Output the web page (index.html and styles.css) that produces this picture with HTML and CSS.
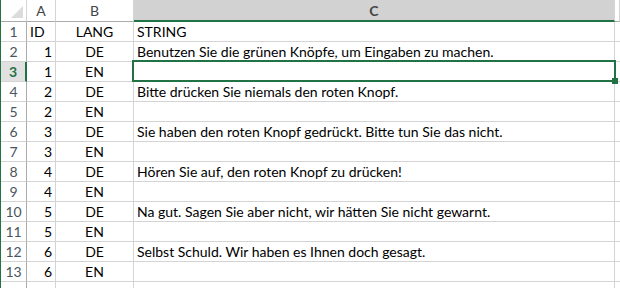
FILE: index.html
```html
<!DOCTYPE html>
<html lang="de">
<head>
    <meta charset="UTF-8">
    <title>Mappe1 - Excel</title>
    <link rel="stylesheet" href="styles.css">
</head>
<body>
    <div class="sheet">
        <div class="row head">
            <div class="corner"><span class="tri"></span></div>
            <div class="ch">A</div>
            <div class="ch">B</div>
            <div class="ch active">C</div>
            <div class="ch"></div>
        </div>
        <div class="row"><div class="rh">1</div><div class="c">ID</div><div class="c mid">LANG</div><div class="c">STRING</div><div class="c"></div></div>
        <div class="row"><div class="rh">2</div><div class="c num">1</div><div class="c mid">DE</div><div class="c">Benutzen Sie die grünen Knöpfe, um Eingaben zu machen.</div><div class="c"></div></div>
        <div class="row"><div class="rh active">3</div><div class="c num">1</div><div class="c mid">EN</div><div class="c"></div><div class="c"></div></div>
        <div class="row"><div class="rh">4</div><div class="c num">2</div><div class="c mid">DE</div><div class="c">Bitte drücken Sie niemals den roten Knopf.</div><div class="c"></div></div>
        <div class="row"><div class="rh">5</div><div class="c num">2</div><div class="c mid">EN</div><div class="c"></div><div class="c"></div></div>
        <div class="row"><div class="rh">6</div><div class="c num">3</div><div class="c mid">DE</div><div class="c">Sie haben den roten Knopf gedrückt. Bitte tun Sie das nicht.</div><div class="c"></div></div>
        <div class="row"><div class="rh">7</div><div class="c num">3</div><div class="c mid">EN</div><div class="c"></div><div class="c"></div></div>
        <div class="row"><div class="rh">8</div><div class="c num">4</div><div class="c mid">DE</div><div class="c">Hören Sie auf, den roten Knopf zu drücken!</div><div class="c"></div></div>
        <div class="row"><div class="rh">9</div><div class="c num">4</div><div class="c mid">EN</div><div class="c"></div><div class="c"></div></div>
        <div class="row"><div class="rh">10</div><div class="c num">5</div><div class="c mid">DE</div><div class="c">Na gut. Sagen Sie aber nicht, wir hätten Sie nicht gewarnt.</div><div class="c"></div></div>
        <div class="row"><div class="rh">11</div><div class="c num">5</div><div class="c mid">EN</div><div class="c"></div><div class="c"></div></div>
        <div class="row"><div class="rh">12</div><div class="c num">6</div><div class="c mid">DE</div><div class="c">Selbst Schuld. Wir haben es Ihnen doch gesagt.</div><div class="c"></div></div>
        <div class="row"><div class="rh">13</div><div class="c num">6</div><div class="c mid">EN</div><div class="c"></div><div class="c"></div></div>
        <div class="row"><div class="rh"></div><div class="c"></div><div class="c"></div><div class="c"></div><div class="c"></div></div>

        <!-- selected cell C3 -->
        <div class="selection"><span class="handle"></span></div>
    </div>
</body>
</html>
```

FILE: styles.css
```css
body {
    margin: 0;
    background-color: #fff;
    font-family: Lato, "Liberation Sans", sans-serif;
    font-size: 14px;
    color: #000;
    overflow: hidden;
}
.sheet {
    position: relative;
    border-left: 1px solid #217346;
    height: 288px;
    overflow: hidden;
}
.row {
    display: grid;
    grid-template-columns: 26px 29px 78px 481px 1fr;
    height: 20px;
}
.row > div {
    box-sizing: border-box;
    border-right: 1px solid #d4d4d4;
    border-bottom: 1px solid #d4d4d4;
    white-space: nowrap;
    overflow: hidden;
}
.row.head {
    height: 22px;
}
.row.head > div {
    border-bottom: 1px solid #ababab;
    color: #444;
    text-align: center;
    line-height: 21px;
}
.corner {
    position: relative;
}
.tri {
    position: absolute;
    right: 3px;
    bottom: 3px;
    width: 0;
    height: 0;
    border-left: 12px solid transparent;
    border-bottom: 12px solid #dcdcdc;
}
.ch.active {
    background-color: #d2d2d2;
    color: #217346;
    font-weight: bold;
    border-bottom: 2px solid #217346 !important;
}
.rh {
    text-align: center;
    color: #4a5560;
    line-height: 19px;
    border-right-color: #ababab !important;
}
.rh.active {
    background-color: #e1e1e1;
    color: #217346;
    font-weight: bold;
    border-right: 2px solid #217346 !important;
}
.c {
    padding: 0 3px;
    line-height: 19px;
}
.c.num {
    text-align: right;
}
.c.mid {
    text-align: center;
}
.selection {
    position: absolute;
    left: 131px;
    top: 60px;
    width: 484px;
    height: 22px;
    box-sizing: border-box;
    border: 2px solid #217346;
}
.handle {
    position: absolute;
    right: -4px;
    bottom: -4px;
    width: 6px;
    height: 6px;
    background-color: #217346;
}
```
